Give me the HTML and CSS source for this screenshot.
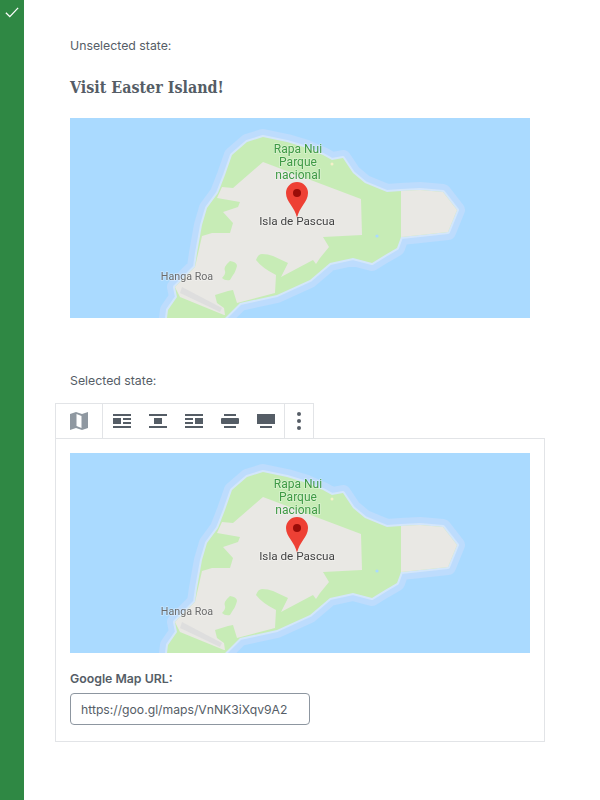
FILE: index.html
```html
<!DOCTYPE html>
<html lang="en">
<head>
<meta charset="utf-8">
<title>Google Map block</title>
<link rel="stylesheet" href="styles.css">
</head>
<body>
<div class="page">
  <aside class="sidebar">
    <svg class="check" viewBox="0 0 16 12" width="14" height="10.500"><path d="M1 6.500 L5.500 11 L15 1" fill="none" stroke="#fff" stroke-width="1.500"/></svg>
  </aside>
  <main class="content">
    <svg class="defs" width="0" height="0" aria-hidden="true">
      <defs>
        <path id="coast" d="M97 200 L98 192 L107 179 L105 169 L125 149 L127 135 L132 107 L137 90 L148 75 L155 57 L162 37 L177 24 L193 19 L217 24 L237 30 L253 37 L262 42 L273 40 L283 55 L295 65 L317 74 L331 73 L350 72 L373 74 L387 92 L378 114 L350 117 L331 119 L327 130 L315 137 L302 145 L283 140 L260 145 L240 162 L207 177 L170 185 L155 200 Z"/>
        <g id="island">
          <use href="#coast" class="halo-outer"/>
          <use href="#coast" class="halo-inner"/>
          <use href="#coast" class="land"/>
          <path class="urban" d="M193 44 L163 70 L152 69 L147 80 L170 84 L168 89 L153 94 L163 105 L160 115 L142 115 L132 118 L125 149 L105 169 L110 179 L154 197 L155 197 L154 190 L147 185 L145 177 L158 173 L163 172 L167 185 L205 175 L206 157 Q192 150 186 142 Q188 136 192 136 Q198 136 203 138 L218 145 L211 159 L243 142 L246 146 L250 140 L259 129 L253 119 L292 117 L291 81 Z"/>
          <path class="urban" d="M331 73 L350 72 L373 74 L387 92 L378 114 L350 117 L331 119 Z"/>
          <path class="land" d="M160 143 Q167 144 167 148 Q165 155 163 157 L160 162 Q155 163 152 160 Q156 156 155 153 Q153 149 160 143 Z"/>
          <path class="runway" d="M112 169 L152 190 L150 194 L110 175 Z"/>
          <circle class="water" cx="307" cy="118" r="1.600"/>
          <circle class="sand" cx="262" cy="46" r="1.500"/>
        </g>
        <g id="pin">
          <path class="pin-body" d="M227 64 a11 11 0 0 1 11 11 c0 9 -9 14 -11 25 c-2 -11 -11 -16 -11 -25 a11 11 0 0 1 11 -11 z"/>
          <circle class="pin-dot" cx="227" cy="75" r="4"/>
        </g>
      </defs>
    </svg>

    <p class="note note-first">Unselected state:</p>
    <h2 class="title">Visit Easter Island!</h2>
    <svg class="map" viewBox="0 0 460 200" width="460" height="200">
      <rect class="sea" width="460" height="200"/>
      <use href="#island"/>
      <text class="lbl park" x="228" y="35">Rapa Nui</text>
      <text class="lbl park" x="228" y="48">Parque</text>
      <text class="lbl park" x="228" y="61">nacional</text>
      <use href="#pin"/>
      <text class="lbl place" x="227" y="107">Isla de Pascua</text>
      <text class="lbl town" x="117" y="162">Hanga Roa</text>
    </svg>

    <p class="note note-second">Selected state:</p>
    <div class="block">
      <div class="toolbar">
        <div class="group group-type">
          <svg class="icon" viewBox="0 0 18 18"><path class="muted" fill-rule="evenodd" d="M0 2 L6 0 L12 2 L18 0 V16 L12 18 L6 16 L0 18 Z M6.500 2 V14 L11.500 16 V4 Z"/></svg>
        </div>
        <div class="group group-align">
          <button class="tool"><svg class="icon" viewBox="0 0 18 18"><path d="M0 2h18v2H0zM0 6h8v6H0zM10 6h8v2h-8zM10 10h8v2h-8zM0 14h18v2H0z"/></svg></button>
          <button class="tool"><svg class="icon" viewBox="0 0 18 18"><path d="M0 2h18v2H0zM5 6h8v6H5zM0 14h18v2H0z"/></svg></button>
          <button class="tool"><svg class="icon" viewBox="0 0 18 18"><path d="M0 2h18v2H0zM10 6h8v6h-8zM0 6h8v2H0zM0 10h8v2H0zM0 14h18v2H0z"/></svg></button>
          <button class="tool"><svg class="icon" viewBox="0 0 18 18"><path d="M3 2h12v2H3zM1 6h16a1 1 0 0 1 1 1v4a1 1 0 0 1-1 1H1a1 1 0 0 1-1-1V7a1 1 0 0 1 1-1zM3 14h12v2H3z"/></svg></button>
          <button class="tool"><svg class="icon" viewBox="0 0 18 18"><path d="M0 2h18v10H0zM3 14h12v2H3z"/></svg></button>
        </div>
        <div class="group group-more">
          <svg class="dots" viewBox="0 0 4 18" width="4" height="18"><circle cx="2" cy="2" r="2"/><circle cx="2" cy="9" r="2"/><circle cx="2" cy="16" r="2"/></svg>
        </div>
      </div>
      <div class="panel">
        <svg class="map" viewBox="0 0 460 200" width="460" height="200">
          <rect class="sea" width="460" height="200"/>
          <use href="#island"/>
          <text class="lbl park" x="228" y="35">Rapa Nui</text>
          <text class="lbl park" x="228" y="48">Parque</text>
          <text class="lbl park" x="228" y="61">nacional</text>
          <use href="#pin"/>
          <text class="lbl place" x="227" y="107">Isla de Pascua</text>
          <text class="lbl town" x="117" y="162">Hanga Roa</text>
        </svg>
        <label class="field-label" for="url">Google Map URL:</label>
        <input class="field" id="url" type="text" value="https://goo.gl/maps/VnNK3iXqv9A2">
      </div>
    </div>
  </main>
</div>
</body>
</html>
```

FILE: styles.css
```css
* { box-sizing: border-box; }
html, body { margin: 0; padding: 0; background: #fff; }
body { font-family: Inter, "Liberation Sans", sans-serif; color: #555d66; }
.page { display: flex; min-height: 800px; }
.sidebar { width: 24px; flex: none; background: #2f8844; padding: 7px 0 0 5px; }
.check { display: block; }
.content { flex: 1; padding: 0 0 0 46px; }
.defs { position: absolute; }
.note { margin: 0; font-size: 12.300px; line-height: 20px; color: #555d66; }
.note-first { padding-top: 36px; }
.note-second { margin-top: 53px; }
.title { margin: 21px 0 19px; font-family: "DejaVu Serif Condensed", "DejaVu Serif", serif; font-stretch: condensed; font-size: 15.900px; line-height: 22px; font-weight: 700; color: #555d66; }
.map { display: block; filter: blur(0.45px); }
.sea { fill: #aadaff; }
.halo-outer { fill: #bddcfd; stroke: #bddcfd; stroke-width: 16; stroke-linejoin: round; }
.halo-inner { fill: #d3e6fb; stroke: #d3e6fb; stroke-width: 4; stroke-linejoin: round; }
.land { fill: #c7ecb6; }
.urban { fill: #e9e8e4; }
.runway { fill: #dedede; }
.water { fill: #aadaff; }
.sand { fill: #f5f0c8; }
.pin-body { fill: #ee4034; }
.pin-dot { fill: #9a0c08; }
.lbl { font-family: Roboto, "Liberation Sans", sans-serif; font-size: 12px; text-anchor: middle; paint-order: stroke; stroke: rgba(255, 255, 255, 0.35); stroke-width: 1.500px; }
.park { fill: #3f9a45; }
.place { fill: #444; font-size: 11.700px; }
.town { fill: #6b6b6b; font-size: 10.700px; }
.block { margin: 12px 0 0 -15px; width: 490px; }
.toolbar { display: flex; width: 259px; height: 36px; margin-bottom: -1px; border: 1px solid #e2e4e7; background: #fff; position: relative; }
.group { display: flex; align-items: center; }
.group-type { width: 47px; padding-left: 14px; border-right: 1px solid #e2e4e7; }
.group-align { width: 182px; padding-left: 1px; border-right: 1px solid #e2e4e7; }
.group-more { flex: 1; justify-content: center; }
.tool { width: 36px; height: 34px; padding: 0 9px; border: 0; background: none; display: flex; align-items: center; }
.icon { width: 18px; height: 18px; display: block; fill: #555d66; flex: none; }
.icon .muted { fill: #8f98a1; }
.dots { fill: #555d66; display: block; }
.panel { border: 1px solid #e2e4e7; padding: 14px 14px 16px; height: 304px; }
.field-label { display: block; margin-top: 17px; font-size: 12.300px; line-height: 18px; font-weight: 600; color: #555d66; }
.field { display: block; width: 240px; height: 32px; margin-top: 5px; padding: 0 10px; border: 1px solid #8d96a0; border-radius: 4px; font-family: Inter, "Liberation Sans", sans-serif; font-size: 12.200px; color: #555d66; background: #fff; }
```
